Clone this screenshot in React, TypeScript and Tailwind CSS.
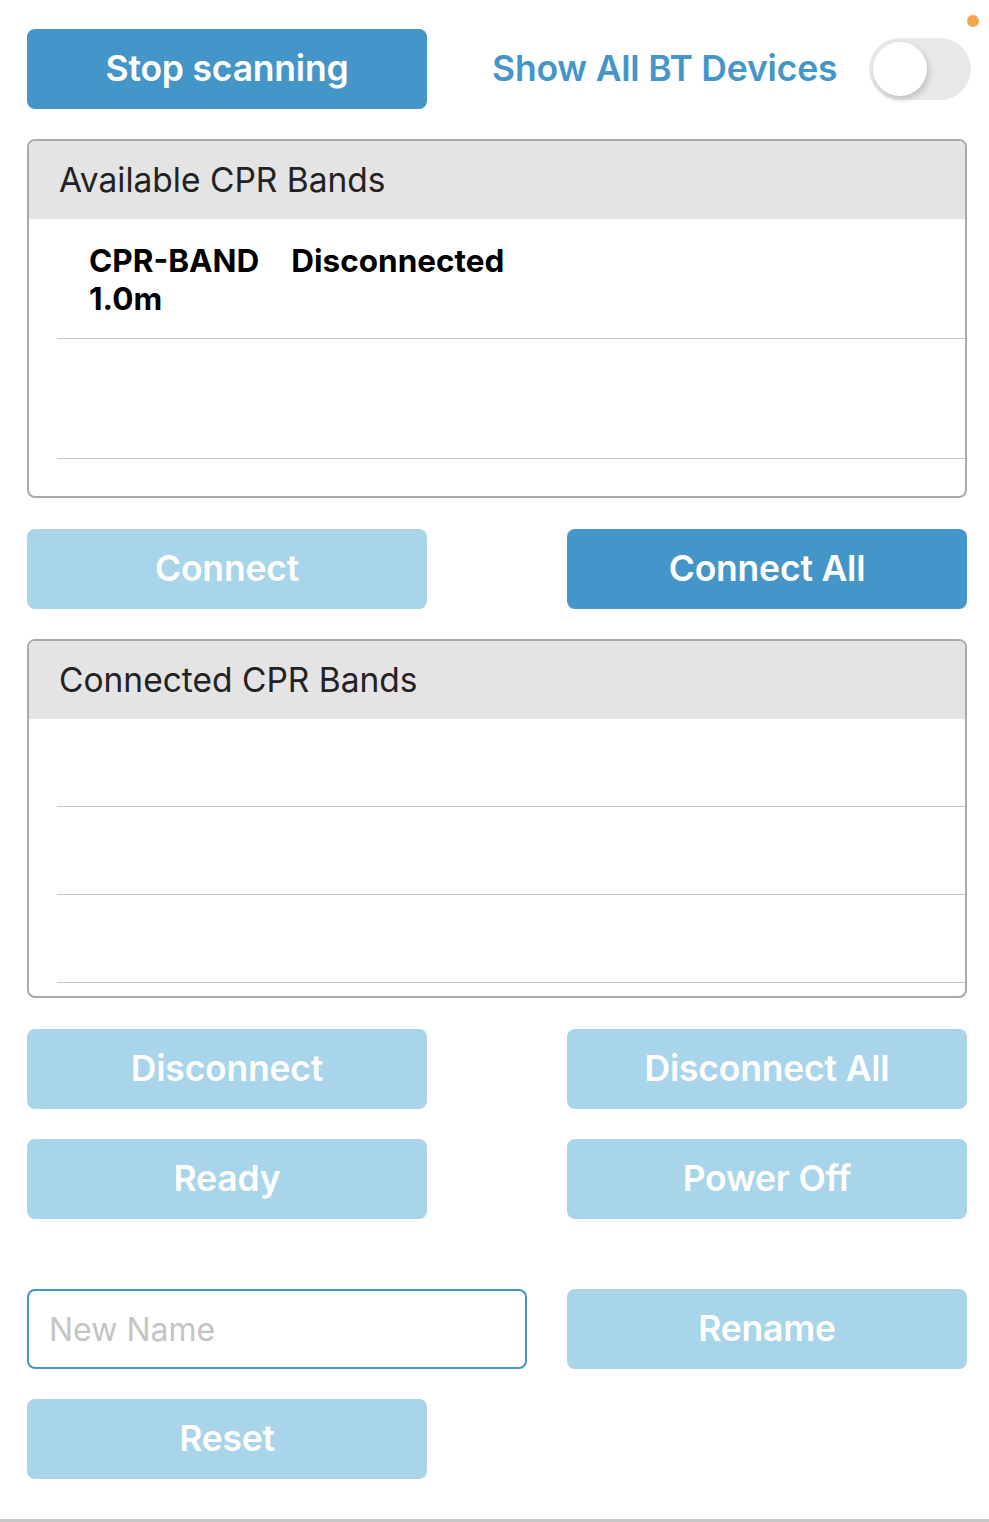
import React from 'react';

// Pantalla de emparejado de bandas CPR
const font = { fontFamily: 'Inter, "Liberation Sans", sans-serif' };

function Btn({ label, active = false }: { label: string; active?: boolean }) {
  return (
    <button
      className={
        'w-[400px] h-[80px] rounded-[8px] text-white text-[35.5px] font-semibold tracking-[-0.2px] flex items-center justify-center ' +
        (active ? 'bg-[#4596c8]' : 'bg-[#a8d5e9]')
      }
    >
      {label}
    </button>
  );
}

function Card({
  title,
  rowHeight,
  rows,
}: {
  title: string;
  rowHeight: string;
  rows: React.ReactNode[];
}) {
  return (
    <div className="w-[940px] h-[359px] border-2 border-[#a9a9a9] rounded-[8px] overflow-hidden flex flex-col">
      <div className="h-[78px] bg-[#e4e4e4] flex items-center pl-[30px] text-[33.5px] text-[#222222] shrink-0">
        {title}
      </div>
      {rows.map((row, i) => (
        <div key={i} className={'ml-[28px] border-b border-[#c4c4c4] shrink-0 ' + rowHeight}>
          {row}
        </div>
      ))}
    </div>
  );
}

export default function App() {
  return (
    <div className="w-[989px] h-[1522px] bg-white relative" style={font}>
      <div className="absolute left-[967px] top-[15px] w-[12px] h-[12px] rounded-full bg-[#f0a64a]" />

      <div className="pt-[29px] pl-[27px]">
        {/* Fila superior */}
        <div className="flex items-center h-[80px] w-[940px]">
          <Btn label="Stop scanning" active />
          <span className="ml-[65px] text-[35.5px] font-semibold text-[#4596c8] tracking-[-0.2px]">
            Show All BT Devices
          </span>
          <div className="ml-auto mr-[-4px] w-[102px] h-[62px] rounded-full bg-[#e8e8e8] p-[4px]">
            <div className="w-[54px] h-[54px] rounded-full bg-white shadow-[2px_3px_6px_rgba(0,0,0,0.18)]" />
          </div>
        </div>

        {/* Disponibles */}
        <div className="mt-[30px]">
          <Card
            title="Available CPR Bands"
            rowHeight="h-[120px]"
            rows={[
              <div className="pt-[23px] pl-[32px] text-[31.5px] font-bold text-black leading-[38px]">
                <div className="flex gap-[32px]">
                  <span>CPR-BAND</span>
                  <span>Disconnected</span>
                </div>
                <div>1.0m</div>
              </div>,
              <div />,
            ]}
          />
        </div>

        <div className="mt-[31px] flex justify-between w-[940px]">
          <Btn label="Connect" />
          <Btn label="Connect All" active />
        </div>

        {/* Conectadas */}
        <div className="mt-[30px]">
          <Card title="Connected CPR Bands" rowHeight="h-[88px]" rows={[<div />, <div />, <div />]} />
        </div>

        <div className="mt-[31px] flex justify-between w-[940px]">
          <Btn label="Disconnect" />
          <Btn label="Disconnect All" />
        </div>
        <div className="mt-[30px] flex justify-between w-[940px]">
          <Btn label="Ready" />
          <Btn label="Power Off" />
        </div>

        <div className="mt-[70px] flex justify-between w-[940px]">
          <input
            placeholder="New Name"
            className="w-[500px] h-[80px] rounded-[8px] border-2 border-[#4596c8] px-[20px] text-[32px] placeholder:text-[#c4c4c4] outline-none"
            style={font}
          />
          <Btn label="Rename" />
        </div>
        <div className="mt-[30px]">
          <Btn label="Reset" />
        </div>
      </div>

      <div className="absolute left-0 right-0 top-[1519px] h-[3px] bg-[#c8c8c8]" />
    </div>
  );
}
